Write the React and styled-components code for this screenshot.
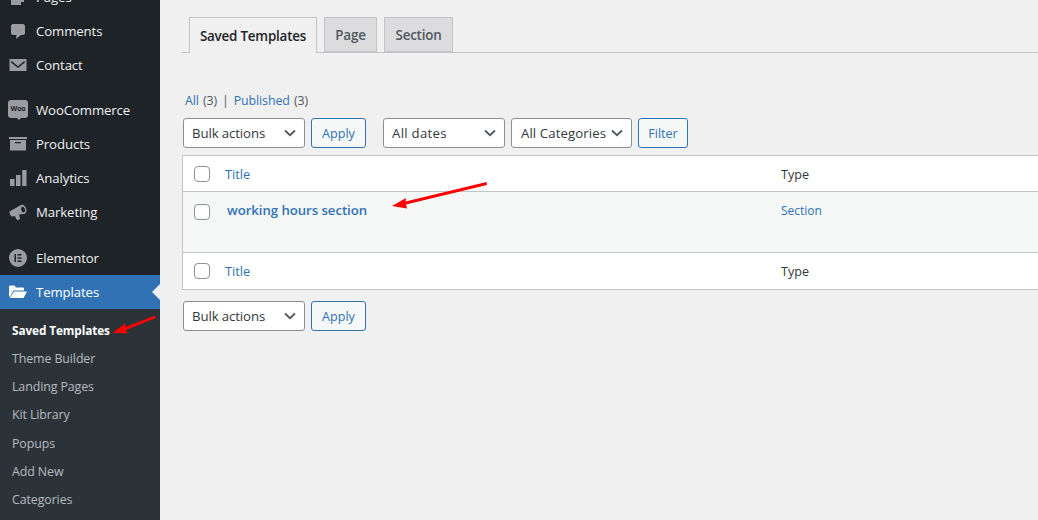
import React from 'react';
import styled, { createGlobalStyle } from 'styled-components';

const GlobalStyle = createGlobalStyle`
    html, body {
        margin: 0;
        padding: 0;
        background: #f0f0f1;
    }
    body {
        font-family: "Open Sans", "Noto Sans", "Liberation Sans", sans-serif;
        font-size: 13px;
        color: #3c434a;
    }
`

const linkBlue = '#2f72b5';

const Page = styled.div`
    position: relative;
    display: flex;
    width: 1038px;
    height: 520px;
    overflow: hidden;
    background: #f0f0f1;
`

const Sidebar = styled.nav`
    flex: none;
    width: 160px;
    height: 520px;
    overflow: hidden;
    background: #1d2327;
`

const Menu = styled.div`
    margin-top: -20px;
    display: flex;
    flex-direction: column;
`

const MenuItem = styled.div`
    position: relative;
    display: flex;
    align-items: center;
    height: 34px;
    flex: none;
    color: ${p => p.$active ? '#fff' : '#f0f0f1'};
    background: ${p => p.$active ? '#3072b4' : 'transparent'};
    font-size: 13.2px;
    letter-spacing: -0.1px;
    margin-top: ${p => p.$gap || 0}px;
`

const IconSlot = styled.span`
    flex: none;
    width: 36px;
    display: flex;
    justify-content: center;
    align-items: center;
    color: ${p => p.$active ? '#fff' : '#9a9ca0'};
`

const ActiveNotch = styled.span`
    position: absolute;
    right: 0;
    top: 9px;
    border: 8px solid transparent;
    border-left-width: 0;
    border-right-color: #f0f0f1;
`

const Submenu = styled.div`
    background: #2c3338;
    padding: 8px 0 7px;
    display: flex;
    flex-direction: column;
`

const SubItem = styled.div`
    height: 28.17px;
    line-height: ${p => p.$active ? '26px' : '28px'};
    padding-left: 12px;
    font-size: ${p => p.$active ? '11.8px' : '12.4px'};
    letter-spacing: -0.1px;
    white-space: nowrap;
    color: ${p => p.$active ? '#fff' : 'rgba(240,246,252,.7)'};
    font-weight: ${p => p.$active ? 700 : 400};
`

const Main = styled.main`
    flex: 1;
    min-width: 0;
    padding: 17px 0 0 22px;
    overflow: hidden;
`

const Tabs = styled.div`
    display: flex;
    gap: 7px;
    height: 35px;
    padding-left: 7px;
    border-bottom: 1px solid #c3c4c7;
`

const Tab = styled.div`
    display: flex;
    align-items: center;
    justify-content: center;
    box-sizing: border-box;
    width: ${p => p.$width}px;
    height: ${p => p.$active ? '36px' : '35px'};
    border: 1px solid #c3c4c7;
    border-bottom: ${p => p.$active ? 'none' : '1px solid #c3c4c7'};
    background: ${p => p.$active ? '#f0f0f1' : '#dcdcde'};
    color: ${p => p.$active ? '#1d2327' : '#50575e'};
    font-size: 13.4px;
    font-weight: 600;
    letter-spacing: -0.2px;
`

const Filters = styled.div`
    margin: 39px 0 0 3px;
    height: 18px;
    line-height: 18px;
    font-size: 12.4px;
    letter-spacing: -0.1px;
    color: #50575e;
`

const BlueLink = styled.span`
    color: ${linkBlue};
    margin-right: 1px;
`

const Divider = styled.span`
    margin: 0 5px;
`

const Toolbar = styled.div`
    display: flex;
    align-items: center;
    margin-top: ${p => p.$top}px;
    margin-left: 1px;
`

const Dropdown = styled.div`
    box-sizing: border-box;
    display: flex;
    align-items: center;
    justify-content: space-between;
    width: ${p => p.$width}px;
    height: 30px;
    margin-right: ${p => p.$after}px;
    padding: 0 6px 0 ${p => p.$left || 8}px;
    background: #fff;
    border: 1px solid #8c8f94;
    border-radius: 3px;
    color: #32373c;
    font-size: 13.2px;
    letter-spacing: ${p => p.$spacing || -0.1}px;
    white-space: nowrap;
`

const Button = styled.div`
    box-sizing: border-box;
    display: flex;
    align-items: center;
    justify-content: center;
    width: ${p => p.$width}px;
    height: 30px;
    margin-right: ${p => p.$after || 0}px;
    background: #f6f7f7;
    border: 1px solid ${linkBlue};
    border-radius: 3px;
    color: ${linkBlue};
    font-size: 12.6px;
`

const Table = styled.div`
    box-sizing: border-box;
    width: 960px;
    margin-top: 7px;
    background: #fff;
    border: 1px solid #c3c4c7;
`

const Row = styled.div`
    display: grid;
    grid-template-columns: 42px 556px 1fr;
    height: ${p => p.$height}px;
    box-sizing: border-box;
    padding-top: ${p => p.$pad || 0}px;
    background: ${p => p.$body ? '#f6f7f7' : '#fff'};
    border-top: ${p => p.$line ? '1px solid #c3c4c7' : 'none'};
`

const Cell = styled.div`
    display: flex;
    align-items: ${p => p.$top ? 'flex-start' : 'center'};
    padding-top: ${p => p.$top ? '10px' : '0'};
`

const Check = styled.span`
    box-sizing: border-box;
    display: block;
    width: 16px;
    height: 16px;
    margin: ${p => p.$offset || 0}px 0 0 11px;
    background: #fff;
    border: 1px solid #8c8f94;
    border-radius: 4px;
`

const SortLink = styled.span`
    color: ${linkBlue};
    font-size: 12.8px;
`

const TypeLabel = styled.span`
    color: #32373c;
    font-size: 12.6px;
`

const RowTitle = styled.span`
    margin: -1px 0 0 2px;
    color: ${linkBlue};
    font-size: 13.2px;
    font-weight: 600;
    letter-spacing: -0.05px;
    line-height: 18px;
`

const RowType = styled.span`
    color: ${linkBlue};
    font-size: 12px;
    line-height: 18px;
`

const ArrowLayer = styled.svg`
    position: absolute;
    left: 0;
    top: 0;
    pointer-events: none;
`

const WooBadge = styled.span`
    position: relative;
    display: block;
    width: 20px;
    height: 18px;
    margin-top: -2px;
    background: #9a9ca0;
    border-radius: 3px;
    color: #1d2327;
    font-size: 7px;
    font-weight: 700;
    line-height: 18px;
    text-align: center;
    letter-spacing: -0.2px;
    &::after {
        content: '';
        position: absolute;
        left: 9px;
        bottom: -2px;
        border: 2px solid transparent;
        border-bottom-width: 0;
        border-top-color: #9a9ca0;
    }
`

const PagesIcon = () => (
    <svg width="20" height="20" viewBox="0 0 20 20" fill="currentColor">
        <path d="M5 2h11v13h-3v3H3V5h2V2zm2 2v1h6v8h1V4H7zM5 8v1h6V8H5zm0 3v1h6v-1H5z" fillRule="evenodd" />
    </svg>
);

const CommentIcon = () => (
    <svg width="20" height="20" viewBox="0 0 20 20" fill="currentColor">
        <path d="M5 3h10c1 0 2 1 2 2v7c0 1-1 2-2 2h-2l-5 4 .5-4H5c-1 0-2-1-2-2V5c0-1 1-2 2-2z" />
    </svg>
);

const MailIcon = () => (
    <svg width="20" height="20" viewBox="0 0 20 20" fill="currentColor">
        <path d="M1.500 4h17v12h-17V4zm2.300 2L10 11.200 16.200 6l1 1.200L10 13 2.800 7.200 3.800 6z" fillRule="evenodd" />
    </svg>
);

const BoxIcon = () => (
    <svg width="20" height="20" viewBox="0 0 20 20" fill="currentColor">
        <path d="M1 3h18v2H1V3zm1 3h16v10.500H2V6zm5 2v1.300h6V8H7z" fillRule="evenodd" />
    </svg>
);

const BarsIcon = () => (
    <svg width="20" height="20" viewBox="0 0 20 20" fill="currentColor">
        <path d="M2 11h4.500v7H2v-7zm6-4h4.500v11H8V7zm6.200-5h4.300v16h-4.300V2z" />
    </svg>
);

const MegaphoneIcon = () => (
    <svg width="20" height="20" viewBox="0 0 20 20" fill="currentColor">
        <path fillRule="evenodd" d="M1.500 9.500 13 3c2-1 4 .5 5 3s.5 5-1.500 6L11 12.500l1 3.500c.2.700-.2 1.300-.8 1.500l-1.500.4c-.7.200-1.200-.2-1.500-.8L7 14l-2.500.5c-1 .2-1.800-.5-2.200-1.500l-.7-2c-.2-.600-.3-1.100-.1-1.500zM14 5c-1 .5-1.200 2-.6 3.500s1.800 2.300 2.800 1.800 1.200-2 .6-3.500S15 4.500 14 5z" />
    </svg>
);

const ElementorIcon = () => (
    <svg width="20" height="20" viewBox="0 0 20 20" fill="currentColor">
        <path fillRule="evenodd" d="M10 1a9 9 0 1 1 0 18 9 9 0 0 1 0-18zM6.500 6v8H8V6H6.500zm3 0v1.500h4V6h-4zm0 3.250v1.500h4v-1.500h-4zm0 3.250V14h4v-1.500h-4z" />
    </svg>
);

const FolderIcon = () => (
    <svg width="20" height="20" viewBox="0 0 20 20" fill="currentColor">
        <path d="M1 5c0-.800.500-1.500 1.300-1.500h4.200l1.500 2h6.700c.800 0 1.300.500 1.300 1.300V8.500H5.500L2 14.500H1V5zm5 4.500h13L15.500 16H1.700L6 9.500z" />
    </svg>
);

const Chevron = () => (
    <svg width="16" height="16" viewBox="0 0 16 16" fill="none" stroke="#50575e" strokeWidth="1.800">
        <path d="M3 5.500 8 10.200l5-4.700" />
    </svg>
);

const menu = [
    { label: 'Pages', icon: <PagesIcon /> },
    { label: 'Comments', icon: <CommentIcon /> },
    { label: 'Contact', icon: <MailIcon /> },
    { label: 'WooCommerce', icon: <WooBadge>Woo</WooBadge>, gap: 11 },
    { label: 'Products', icon: <BoxIcon /> },
    { label: 'Analytics', icon: <BarsIcon /> },
    { label: 'Marketing', icon: <MegaphoneIcon /> },
    { label: 'Elementor', icon: <ElementorIcon />, gap: 12 },
];

const subMenu = ['Theme Builder', 'Landing Pages', 'Kit Library', 'Popups', 'Add New', 'Categories'];

const BulkBar = ({ top }) => (
    <Toolbar $top={top}>
        <Dropdown $width={122} $after={6}>Bulk actions<Chevron /></Dropdown>
        <Button $width={55}>Apply</Button>
    </Toolbar>
);

const App = () => {
    return (
        <Page>
            <GlobalStyle />
            <Sidebar>
                <Menu>
                    {menu.map(item => (
                        <MenuItem key={item.label} $gap={item.gap}>
                            <IconSlot>{item.icon}</IconSlot>
                            {item.label}
                        </MenuItem>
                    ))}
                    <MenuItem $active>
                        <IconSlot $active><FolderIcon /></IconSlot>
                        Templates
                        <ActiveNotch />
                    </MenuItem>
                    <Submenu>
                        <SubItem $active>Saved Templates</SubItem>
                        {subMenu.map(label => <SubItem key={label}>{label}</SubItem>)}
                    </Submenu>
                </Menu>
            </Sidebar>
            <Main>
                <Tabs>
                    <Tab $active $width={128}>Saved Templates</Tab>
                    <Tab $width={53}>Page</Tab>
                    <Tab $width={69}>Section</Tab>
                </Tabs>
                <Filters>
                    <BlueLink>All</BlueLink> (3)<Divider>|</Divider><BlueLink>Published</BlueLink> (3)
                </Filters>
                <Toolbar $top={8}>
                    <Dropdown $width={122} $after={6}>Bulk actions<Chevron /></Dropdown>
                    <Button $width={55} $after={17}>Apply</Button>
                    <Dropdown $width={122} $after={6} $spacing={0.3}>All dates<Chevron /></Dropdown>
                    <Dropdown $width={121} $after={6} $left={9} $spacing={0.1}>All Categories<Chevron /></Dropdown>
                    <Button $width={50}>Filter</Button>
                </Toolbar>
                <Table>
                    <Row $height={35} $pad={1}>
                        <Cell><Check /></Cell>
                        <Cell><SortLink>Title</SortLink></Cell>
                        <Cell><TypeLabel>Type</TypeLabel></Cell>
                    </Row>
                    <Row $height={61} $line $body>
                        <Cell $top><Check $offset={2} /></Cell>
                        <Cell $top><RowTitle>working hours section</RowTitle></Cell>
                        <Cell $top><RowType>Section</RowType></Cell>
                    </Row>
                    <Row $height={37} $line>
                        <Cell><Check /></Cell>
                        <Cell><SortLink>Title</SortLink></Cell>
                        <Cell><TypeLabel>Type</TypeLabel></Cell>
                    </Row>
                </Table>
                <BulkBar top={11} />
            </Main>
            <ArrowLayer width="1038" height="520" viewBox="0 0 1038 520">
                <path d="M486.500 182 405.500 201.500 406 198 392 206 407 208.500 406 204.500 487 185z" fill="#f00" />
                <path d="M155 315.500 125.500 327 125 323.500 112.700 332.800 127.500 333.500 126 330 155.700 318z" fill="#f00" />
            </ArrowLayer>
        </Page>
    );
}

export default App
